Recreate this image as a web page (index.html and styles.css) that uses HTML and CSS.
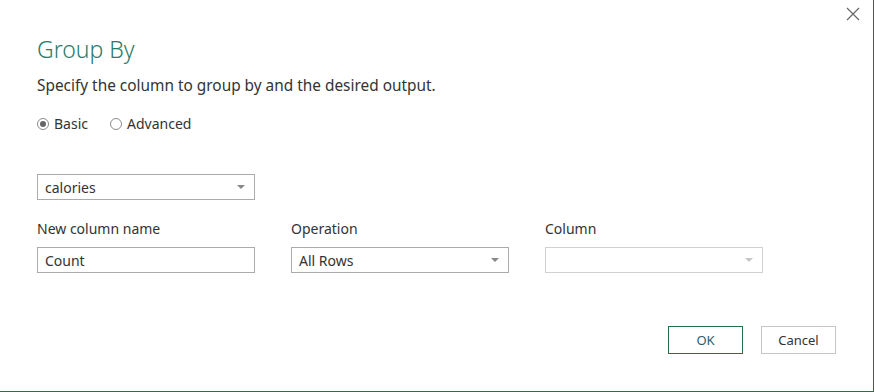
FILE: index.html
```html
<!DOCTYPE html>
<html lang="en">
<head>
  <meta charset="UTF-8" />
  <title>Group By</title>
  <link rel="stylesheet" href="styles.css">
</head>
<body>

  <div class="dialog">
    <button class="close" aria-label="Close">
      <svg width="14" height="14" viewBox="0 0 14 14"><path d="M1 1 L13 13 M13 1 L1 13" stroke="#666" stroke-width="1.2" fill="none"/></svg>
    </button>

    <h1 class="title">Group By</h1>
    <p class="intro">Specify the column to group by and the desired output.</p>

    <div class="radios">
      <label class="radio"><span class="dot checked"></span>Basic</label>
      <label class="radio"><span class="dot"></span>Advanced</label>
    </div>

    <div class="select group-col">
      <span>calories</span>
      <span class="caret"></span>
    </div>

    <div class="fields">
      <div class="field">
        <div class="label">New column name</div>
        <div class="input">Count</div>
      </div>
      <div class="field">
        <div class="label">Operation</div>
        <div class="select">
          <span>All Rows</span>
          <span class="caret"></span>
        </div>
      </div>
      <div class="field">
        <div class="label">Column</div>
        <div class="select disabled">
          <span></span>
          <span class="caret"></span>
        </div>
      </div>
    </div>

    <div class="actions">
      <button class="btn ok">OK</button>
      <button class="btn">Cancel</button>
    </div>
  </div>

</body>
</html>
```

FILE: styles.css
```css
html, body {
  margin: 0;
  height: 100%;
}

body {
  font-family: 'Noto Sans', 'Open Sans', sans-serif;
  color: #333;
  background: white;
}

.dialog {
  position: relative;
  box-sizing: border-box;
  width: 874px;
  height: 392px;
  padding: 33px 0 0 37px;
  border-right: 1px solid #217346;
  border-bottom: 1px solid #217346;
}

.close {
  position: absolute;
  top: 7px;
  right: 13px;
  border: none;
  background: none;
  padding: 0;
  cursor: pointer;
}

.title {
  margin: 0;
  font-size: 23px;
  font-weight: 300;
  color: #2b7a6a;
  line-height: 32px;
}

.intro {
  margin: 11px 0 0;
  font-size: 15.4px;
  line-height: 20px;
  color: #333;
}

.radios {
  display: flex;
  gap: 22px;
  margin-top: 18px;
  font-size: 14px;
  line-height: 20px;
}

.radio {
  display: flex;
  align-items: center;
  gap: 5px;
}

.dot {
  box-sizing: border-box;
  width: 12px;
  height: 12px;
  border: 1px solid #8a8a8a;
  border-radius: 50%;
  display: inline-flex;
  align-items: center;
  justify-content: center;
}

.dot.checked::after {
  content: "";
  width: 6px;
  height: 6px;
  border-radius: 50%;
  background: #666;
}

.select, .input {
  box-sizing: border-box;
  width: 218px;
  height: 26px;
  border: 1px solid #ababab;
  padding: 0 7px;
  display: flex;
  align-items: center;
  justify-content: space-between;
  font-size: 14px;
  color: #333;
}

.group-col {
  margin-top: 40px;
}

.caret {
  width: 0;
  height: 0;
  border-left: 4px solid transparent;
  border-right: 4px solid transparent;
  border-top: 4px solid #888;
  margin-right: 2px;
}

.select.disabled {
  border-color: #d0d0d0;
}

.select.disabled .caret {
  border-top-color: #c6c6c6;
}

.fields {
  display: flex;
  gap: 36px;
  margin-top: 19px;
}

.label {
  font-size: 14px;
  line-height: 20px;
  margin-bottom: 8px;
}

.actions {
  display: flex;
  gap: 18px;
  justify-content: flex-end;
  margin: 53px 37px 0 0;
}

.btn {
  box-sizing: border-box;
  width: 75px;
  height: 28px;
  font-family: inherit;
  font-size: 13px;
  color: #333;
  background: white;
  border: 1px solid #c6c6c6;
}

.btn.ok {
  border-color: #217346;
  color: #2b5f6a;
}
```
